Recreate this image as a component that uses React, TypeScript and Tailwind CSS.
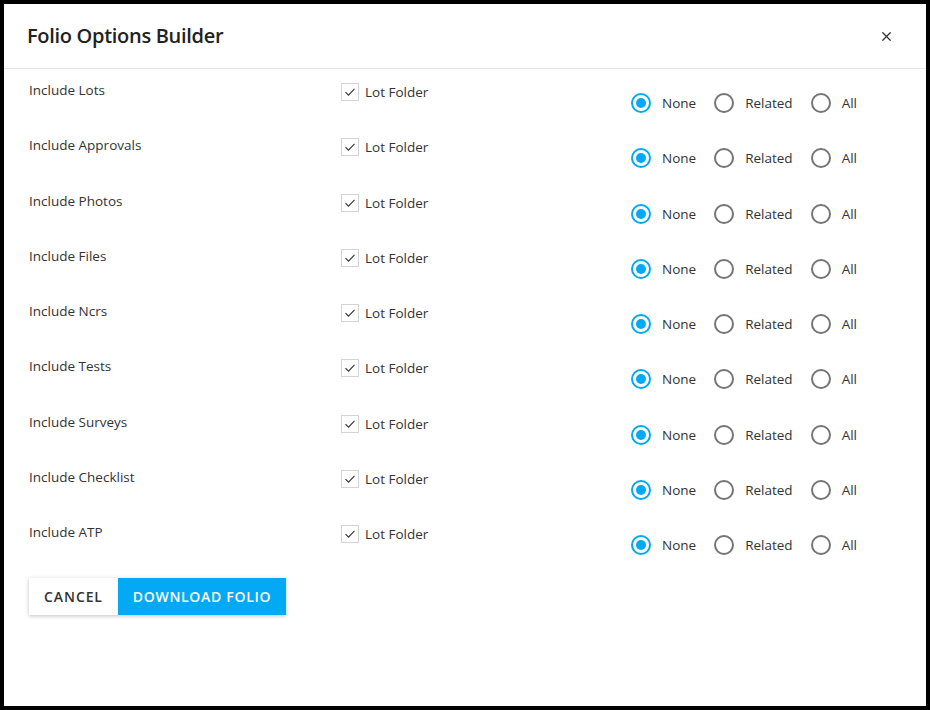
import { X } from "lucide-react"

const sections = [
  "Lots",
  "Approvals",
  "Photos",
  "Files",
  "Ncrs",
  "Tests",
  "Surveys",
  "Checklist",
  "ATP",
]

const scopes = ["None", "Related", "All"]

function Checkbox() {
  return (
    <span className="flex h-[18px] w-[18px] items-center justify-center border border-[#d4d4d4] bg-white">
      <svg viewBox="0 0 12 12" className="h-[12px] w-[12px]" fill="none" stroke="#333" strokeWidth="1.1">
        <path d="M1.5 6.2 L4.5 9.2 L10.5 2.8" />
      </svg>
    </span>
  )
}

function Radio({ checked }: { checked: boolean }) {
  return (
    <span
      className={
        checked
          ? "flex h-[20px] w-[20px] items-center justify-center rounded-full border-2 border-[#03a9f4]"
          : "flex h-[20px] w-[20px] items-center justify-center rounded-full border-2 border-[#757575]"
      }
    >
      {checked && <span className="h-[10px] w-[10px] rounded-full bg-[#03a9f4]" />}
    </span>
  )
}

export default function App() {
  return (
    <div className="h-[710px] w-[930px] bg-black pt-[4px] pl-[4px] font-['Open_Sans',sans-serif]">
      <div className="flex h-[702px] w-[922px] flex-col bg-white">
        <div className="flex h-[65px] items-center justify-between border-b border-[#e6e6e6] pl-[23px] pr-[32px]">
          <h2 className="text-[20px] font-semibold tracking-[-0.3px] text-[#222]">Folio Options Builder</h2>
          <X className="h-[15px] w-[15px] text-[#333]" strokeWidth={2} />
        </div>

        <div className="flex flex-col">
          {sections.map((name) => (
            <div key={name} className="flex h-[55.25px] text-[13.5px] text-[#333]">
              <div className="w-[337px] pl-[25px] pt-[11px] leading-[20px]">Include {name}</div>
              <div className="flex w-[290px] items-start gap-[6px] pt-[14px]">
                <Checkbox />
                <span className="leading-[18px]">Lot Folder</span>
              </div>
              <div className="flex items-start pt-[24px]">
                {scopes.map((s, i) => (
                  <label key={s} className="mr-[18px] flex items-center gap-[11px] leading-[20px]">
                    <Radio checked={i === 0} />
                    <span>{s}</span>
                  </label>
                ))}
              </div>
            </div>
          ))}
        </div>

        <div className="mt-[12px] flex pl-[25px]">
          <div className="flex shadow-[0_1px_4px_rgba(0,0,0,0.25)]">
            <button className="h-[37px] w-[89px] bg-white text-[14px] font-semibold tracking-[0.9px] text-[#333]">
              CANCEL
            </button>
            <button className="h-[37px] w-[168px] bg-[#03a9f4] text-[14px] font-semibold tracking-[0.7px] text-white">
              DOWNLOAD FOLIO
            </button>
          </div>
        </div>
      </div>
    </div>
  )
}
